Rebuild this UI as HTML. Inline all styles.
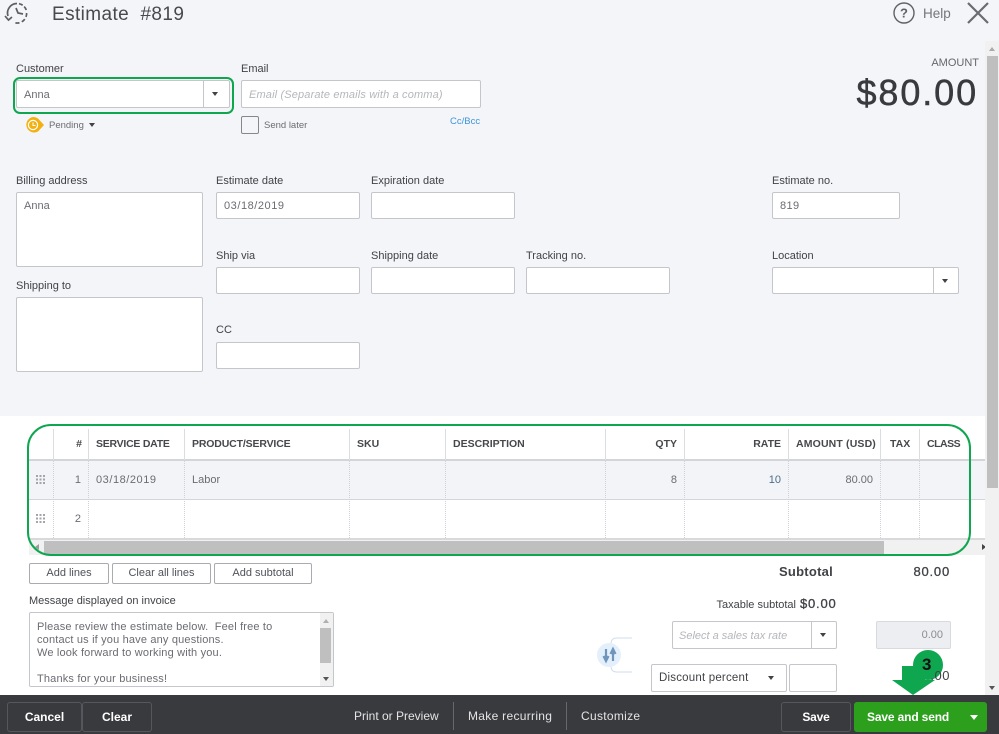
<!DOCTYPE html>
<html><head><meta charset="utf-8"><style>
html,body{margin:0;padding:0;width:999px;height:734px;overflow:hidden;background:#fff}
body{position:relative;font-family:"Liberation Sans",sans-serif;color:#404246}
.a,.t,.i{position:absolute;box-sizing:border-box}
.t{font-size:11px;line-height:14px;white-space:nowrap;color:#404246}
.i{background:#fff;border:1px solid #c4c6cc;border-radius:2px}
.g{color:#6b6c72}
.h{font-weight:bold;color:#46484c;font-size:10.5px}
.v{position:absolute;width:1px;background:#dcdde1}
.c{position:absolute;width:1px;top:429px;height:109px;background:linear-gradient(#dcdde1,#dcdde1) top/1px 31px no-repeat,repeating-linear-gradient(#d0d1d6 0 1px,transparent 1px 2px)}
.r{text-align:right}
.b{position:absolute;box-sizing:border-box;background:#fff;border:1px solid #a9abb0;border-radius:2px;font-size:11px;color:#50525a;text-align:center;line-height:19px;height:21px;top:563px}
.f{position:absolute;box-sizing:border-box;border:1px solid #55575c;border-radius:3px;color:#fff;font-weight:bold;font-size:12px;text-align:center;top:702px;height:30px;line-height:28px;background:#393a3d}
.l{position:absolute;color:#e4e4e6;font-size:12px;line-height:14px;top:709px;white-space:nowrap}
.tri{position:absolute;width:0;height:0;border-left:3.5px solid transparent;border-right:3.5px solid transparent;border-top:4.5px solid #404246}
</style></head><body>
<div class="a" style="left:0;top:0;width:999px;height:416px;background:#f4f5f8"></div>

<svg class="a" style="left:4px;top:2px" width="26" height="24" viewBox="0 0 26 24" fill="none" stroke="#5c5e63" stroke-width="1.7"><path d="M4 14 A9.5 9.5 0 0 1 13 1.5" /><path d="M15 1.7 A9.5 9.5 0 0 1 22.5 9" stroke-dasharray="4 2"/><path d="M22.6 11 A9.5 9.5 0 0 1 11 20.8" stroke-dasharray="4 2.5"/><path d="M12 6 L14 11 L19 12"/><path d="M1 14 L4.5 18 L8 15"/></svg>
<div class="t" style="left:52px;top:3px;font-size:19px;line-height:24px;color:#47494d;letter-spacing:.4px">Estimate&nbsp;&nbsp;#819</div>

<svg class="a" style="left:893px;top:2px" width="22" height="22" viewBox="0 0 22 22" fill="none"><circle cx="11" cy="11" r="10" stroke="#5f6165" stroke-width="1.4"/><text x="11" y="15.5" text-anchor="middle" font-family="Liberation Sans" font-size="13" font-weight="bold" fill="#5f6165">?</text></svg>
<div class="t g" style="left:923px;top:5px;font-size:13.5px;line-height:17px;color:#74767b">Help</div>
<svg class="a" style="left:967px;top:2px" width="22" height="22" viewBox="0 0 22 22" stroke="#6b6c72" stroke-width="2.2"><path d="M1 1 L21 21 M21 1 L1 21"/></svg>

<div class="t r" style="left:900px;top:56px;width:79px;color:#65676c;font-size:11px">AMOUNT</div>
<div class="t r" style="left:830px;top:70px;width:148px;font-size:36px;line-height:46px;color:#393a3d;letter-spacing:1.9px;-webkit-text-stroke:.5px #393a3d">$80.00</div>

<div class="t" style="left:16px;top:62px">Customer</div>
<div class="a" style="left:13px;top:77px;width:221px;height:37px;border:2px solid #0fa650;border-radius:7px"></div>
<div class="i" style="left:16px;top:80px;width:214px;height:28px"></div>
<div class="v" style="left:203px;top:81px;height:26px;background:#c4c6cc"></div>
<div class="tri" style="left:212px;top:92px"></div>
<div class="t g" style="left:24px;top:88px">Anna</div>
<div class="t" style="left:241px;top:62px">Email</div>
<div class="i" style="left:241px;top:80px;width:240px;height:28px"></div>
<div class="t" style="left:249px;top:88px;color:#b4b6bb;font-style:italic;letter-spacing:.15px">Email (Separate emails with a comma)</div>
<svg class="a" style="left:24px;top:116px" width="20" height="18" viewBox="0 0 20 18"><path d="M9 1 A7.8 7.8 0 0 1 14 2.5 L20 9 L14 15.5 A7.8 7.8 0 1 1 9 1Z" fill="#f2b011"/><circle cx="9" cy="9" r="4.6" fill="none" stroke="#fff" stroke-width="1.2"/><path d="M9 6.5 V9.5 H11.5" fill="none" stroke="#fff" stroke-width="1"/></svg>
<div class="t g" style="left:49px;top:119px;font-size:9.5px">Pending</div>
<div class="tri" style="left:89px;top:123px"></div>
<div class="i" style="left:241px;top:116px;width:18px;height:18px;background:#f4f5f8;border-color:#85878c"></div>
<div class="t g" style="left:264px;top:119px;font-size:9.5px">Send later</div>
<div class="t" style="left:450px;top:115px;color:#3d95d8;font-size:9.5px">Cc/Bcc</div>

<div class="t" style="left:16px;top:174px">Billing address</div>
<div class="i" style="left:16px;top:192px;width:187px;height:75px"></div>
<div class="t g" style="left:24px;top:199px">Anna</div>
<div class="t" style="left:16px;top:279px">Shipping to</div>
<div class="i" style="left:16px;top:297px;width:187px;height:75px"></div>

<div class="t" style="left:216px;top:174px">Estimate date</div>
<div class="i" style="left:216px;top:192px;width:144px;height:27px"></div>
<div class="t g" style="left:224px;top:199px;letter-spacing:.55px">03/18/2019</div>
<div class="t" style="left:371px;top:174px">Expiration date</div>
<div class="i" style="left:371px;top:192px;width:144px;height:27px"></div>
<div class="t" style="left:216px;top:249px">Ship via</div>
<div class="i" style="left:216px;top:267px;width:144px;height:27px"></div>
<div class="t" style="left:371px;top:249px">Shipping date</div>
<div class="i" style="left:371px;top:267px;width:144px;height:27px"></div>
<div class="t" style="left:526px;top:249px">Tracking no.</div>
<div class="i" style="left:526px;top:267px;width:144px;height:27px"></div>
<div class="t" style="left:216px;top:323px">CC</div>
<div class="i" style="left:216px;top:342px;width:144px;height:27px"></div>
<div class="t" style="left:772px;top:174px">Estimate no.</div>
<div class="i" style="left:772px;top:192px;width:128px;height:27px"></div>
<div class="t g" style="left:780px;top:199px;letter-spacing:.4px">819</div>
<div class="t" style="left:772px;top:249px">Location</div>
<div class="i" style="left:772px;top:267px;width:187px;height:27px"></div>
<div class="v" style="left:933px;top:268px;height:25px;background:#c4c6cc"></div>
<div class="tri" style="left:942px;top:279px"></div>

<!-- table -->
<div class="a" style="left:29px;top:460px;width:956px;height:40px;background:#f3f4f7"></div>
<div class="a" style="left:29px;top:459px;width:956px;height:2px;background:#d4d5da"></div>
<div class="a" style="left:29px;top:499px;width:956px;height:1px;background:#d4d5da"></div>
<div class="a" style="left:29px;top:538px;width:956px;height:2px;background:#d8d9dd"></div>
<div class="a" style="left:29px;top:540px;width:956px;height:15px;background:#f1f1f1"></div>
<div class="a" style="left:44px;top:541px;width:840px;height:13px;background:#bfbfbf"></div>
<div class="a" style="left:35px;top:544px;border-top:3.5px solid transparent;border-bottom:3.5px solid transparent;border-right:4px solid #9a9a9a"></div>
<div class="a" style="left:982px;top:544px;border-top:3.5px solid transparent;border-bottom:3.5px solid transparent;border-left:4px solid #444"></div>
<div class="c" style="left:53px"></div>
<div class="c" style="left:88px"></div>
<div class="c" style="left:184px"></div>
<div class="c" style="left:349px"></div>
<div class="c" style="left:445px"></div>
<div class="c" style="left:605px"></div>
<div class="c" style="left:684px"></div>
<div class="c" style="left:788px"></div>
<div class="c" style="left:880px"></div>
<div class="c" style="left:919px"></div>
<div class="t h r" style="left:60px;top:437px;width:22px">#</div>
<div class="t h" style="left:96px;top:437px;letter-spacing:-.25px">SERVICE DATE</div>
<div class="t h" style="left:192px;top:437px;letter-spacing:-.15px">PRODUCT/SERVICE</div>
<div class="t h" style="left:357px;top:437px">SKU</div>
<div class="t h" style="left:453px;top:437px">DESCRIPTION</div>
<div class="t h r" style="left:620px;top:437px;width:57px">QTY</div>
<div class="t h r" style="left:720px;top:437px;width:61px">RATE</div>
<div class="t h" style="left:796px;top:437px;letter-spacing:.15px">AMOUNT (USD)</div>
<div class="t h" style="left:890px;top:437px">TAX</div>
<div class="t h" style="left:927px;top:437px;letter-spacing:-.5px">CLASS</div>
<svg class="a" style="left:36px;top:475px" width="10" height="50" fill="#a3a5aa"><g><rect x="0" y="0" width="2" height="2"/><rect x="3.5" y="0" width="2" height="2"/><rect x="7" y="0" width="2" height="2"/><rect x="0" y="3.5" width="2" height="2"/><rect x="3.5" y="3.5" width="2" height="2"/><rect x="7" y="3.5" width="2" height="2"/><rect x="0" y="7" width="2" height="2"/><rect x="3.5" y="7" width="2" height="2"/><rect x="7" y="7" width="2" height="2"/></g><g transform="translate(0 39)"><rect x="0" y="0" width="2" height="2"/><rect x="3.5" y="0" width="2" height="2"/><rect x="7" y="0" width="2" height="2"/><rect x="0" y="3.5" width="2" height="2"/><rect x="3.5" y="3.5" width="2" height="2"/><rect x="7" y="3.5" width="2" height="2"/><rect x="0" y="7" width="2" height="2"/><rect x="3.5" y="7" width="2" height="2"/><rect x="7" y="7" width="2" height="2"/></g></svg>
<div class="t g r" style="left:60px;top:473px;width:21px">1</div>
<div class="t g r" style="left:60px;top:512px;width:21px">2</div>
<div class="t g" style="left:96px;top:473px;letter-spacing:.55px">03/18/2019</div>
<div class="t g" style="left:192px;top:473px">Labor</div>
<div class="t g r" style="left:640px;top:473px;width:37px">8</div>
<div class="t g r" style="left:740px;top:473px;width:41px;color:#4a6d8c">10</div>
<div class="t g r" style="left:810px;top:473px;width:63px">80.00</div>
<div class="a" style="left:27px;top:424px;width:944px;height:132px;border:2px solid #0fa650;border-radius:24px"></div>

<div class="b" style="left:29px;width:80px">Add lines</div>
<div class="b" style="left:112px;width:99px">Clear all lines</div>
<div class="b" style="left:214px;width:98px">Add subtotal</div>
<div class="t" style="left:29px;top:594px">Message displayed on invoice</div>
<div class="i" style="left:29px;top:612px;width:305px;height:75px"></div>
<div class="t g" style="left:37px;top:619px;line-height:13px;letter-spacing:.17px;height:66px;overflow:hidden;padding-top:1px"><div style="margin-top:1px">Please review the estimate below.&nbsp; Feel free to<br>contact us if you have any questions.<br>We look forward to working with you.<br><br>Thanks for your business!</div></div>
<div class="a" style="left:320px;top:613px;width:13px;height:73px;background:#f1f1f1"></div>
<div class="a" style="left:320px;top:628px;width:11px;height:35px;background:#bfbfbf"></div>
<div class="a" style="left:323px;top:619px;border-left:3.5px solid transparent;border-right:3.5px solid transparent;border-bottom:4px solid #b0b0b0"></div>
<div class="a" style="left:323px;top:677px;border-left:3.5px solid transparent;border-right:3.5px solid transparent;border-top:4px solid #555"></div>

<div class="t" style="left:779px;top:564px;font-size:13px;font-weight:bold;line-height:16px;color:#404246;letter-spacing:.25px">Subtotal</div>
<div class="t r" style="left:880px;top:564px;width:70px;font-size:13px;line-height:16px;letter-spacing:.8px;-webkit-text-stroke:.3px #404246">80.00</div>
<div class="t r" style="left:690px;top:598px;width:106px;font-size:11px">Taxable subtotal</div>
<div class="t" style="left:800px;top:596px;font-size:13px;line-height:16px;letter-spacing:.8px;-webkit-text-stroke:.3px #404246">$0.00</div>
<div class="i" style="left:672px;top:621px;width:165px;height:28px"></div>
<div class="v" style="left:811px;top:622px;height:26px;background:#c4c6cc"></div>
<div class="tri" style="left:820px;top:633px"></div>
<div class="t" style="left:679px;top:629px;color:#b4b6bb;font-style:italic">Select a sales tax rate</div>
<div class="i" style="left:876px;top:621px;width:75px;height:28px;background:#eceef1;border-color:#d8dade"></div>
<div class="t r" style="left:880px;top:628px;width:63px;color:#8a8c91">0.00</div>
<svg class="a" style="left:595px;top:636px" width="40" height="38" fill="none"><path d="M37 2 H22 Q16 2 16 8 M16 30 Q16 36 22 36 H37" stroke="#cfdeee" stroke-width="1"/><circle cx="14" cy="19" r="12" fill="#e3effb"/><path d="M11 13 V24 M8.5 20 L11 25 L13.5 20 M18 25 V14 M15.5 18 L18 13 L20.5 18" stroke="#6f95bd" stroke-width="2.2"/></svg>
<div class="i" style="left:651px;top:664px;width:136px;height:28px;border-width:1.5px"></div>
<div class="t" style="left:659px;top:671px;font-size:11.5px;letter-spacing:.2px">Discount percent</div>
<div class="tri" style="left:768px;top:676px"></div>
<div class="i" style="left:789px;top:664px;width:48px;height:28px"></div>

<div class="a" style="left:985px;top:41px;width:14px;height:654px;background:#f1f1f1"></div>
<div class="a" style="left:987px;top:56px;width:11px;height:432px;background:#bfbfbf"></div>
<div class="a" style="left:989px;top:47px;border-left:3.5px solid transparent;border-right:3.5px solid transparent;border-bottom:4px solid #aaa"></div>
<div class="a" style="left:989px;top:686px;border-left:3.5px solid transparent;border-right:3.5px solid transparent;border-top:4px solid #555"></div>

<!-- footer -->
<div class="a" style="left:0;top:695px;width:999px;height:39px;background:#393a3d"></div>
<div class="f" style="left:7px;width:75px">Cancel</div>
<div class="f" style="left:82px;width:70px">Clear</div>
<div class="l" style="left:354px">Print or Preview</div>
<div class="v" style="left:453px;top:702px;height:28px;background:#66686c"></div>
<div class="l" style="left:468px;letter-spacing:.3px">Make recurring</div>
<div class="v" style="left:566px;top:702px;height:28px;background:#66686c"></div>
<div class="l" style="left:581px;letter-spacing:.3px">Customize</div>
<div class="f" style="left:781px;width:70px;letter-spacing:-.2px">Save</div>
<div class="f" style="left:854px;width:133px;background:#2ca01c;border-color:#2ca01c;text-align:left;padding-left:12px;letter-spacing:-.15px">Save and send</div>
<div class="a" style="left:970px;top:715px;border-left:4.5px solid transparent;border-right:4.5px solid transparent;border-top:5px solid #fff"></div>

<svg class="a" style="left:880px;top:645px" width="70" height="50" viewBox="0 0 70 50"><circle cx="48" cy="20" r="15" fill="#0fa650"/><path d="M22 21 H45 V35 H55 L33 50 L12 35 H22Z" fill="#0fa650"/></svg>
<div class="t" style="left:922px;top:655px;font-size:17px;line-height:20px;font-weight:bold;color:#111">3</div>
<div class="t r" style="left:920px;top:668px;width:30px;font-size:13px;line-height:16px;letter-spacing:.5px">.00</div>
</body></html>
